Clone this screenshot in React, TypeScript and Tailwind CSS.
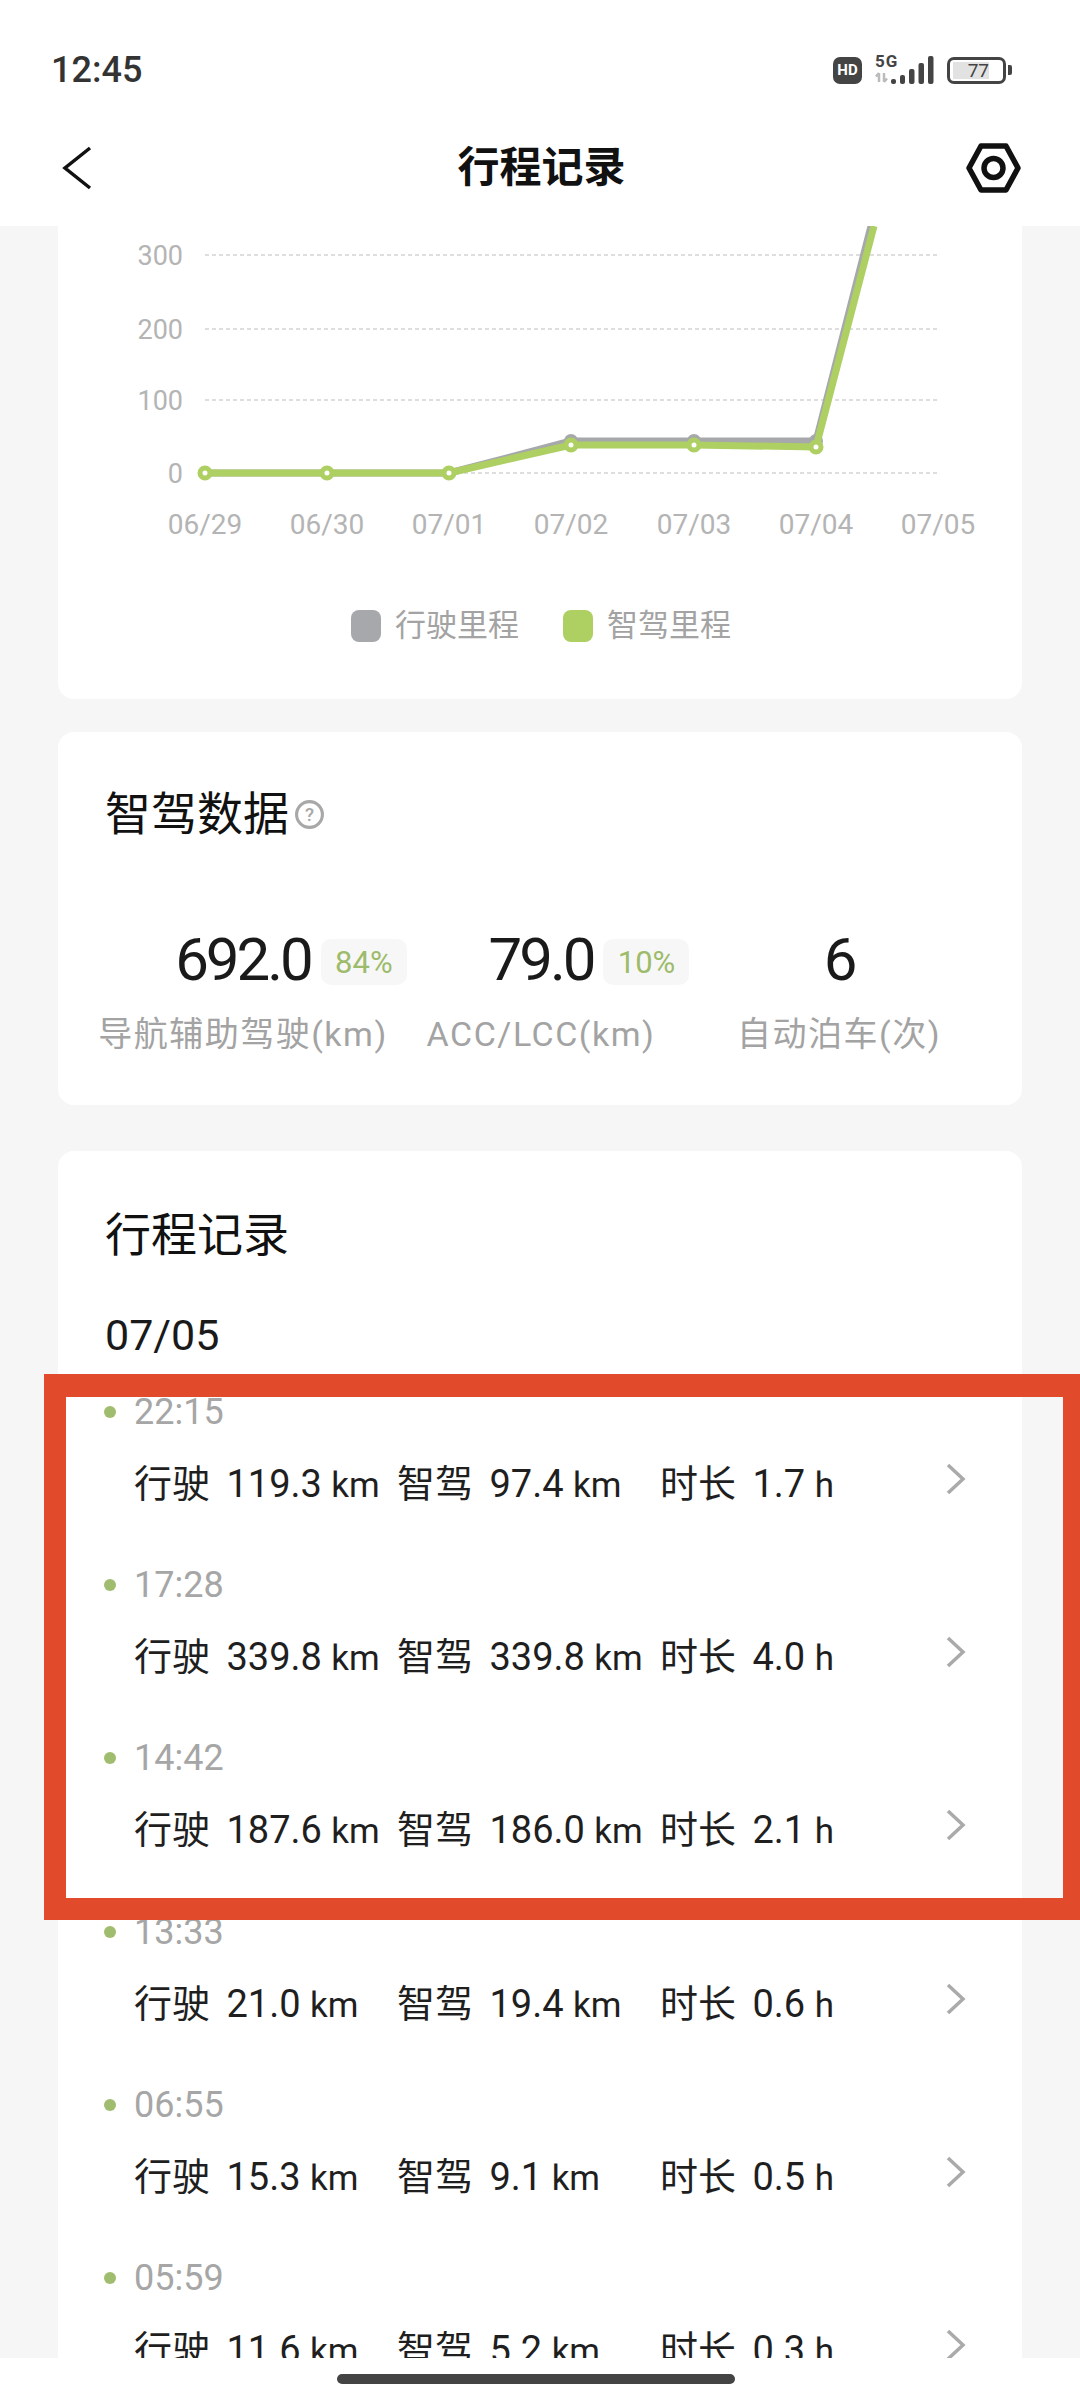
const trips = [
  { time: "22:15", drive: "119.3", smart: "97.4", hours: "1.7" },
  { time: "17:28", drive: "339.8", smart: "339.8", hours: "4.0" },
  { time: "14:42", drive: "187.6", smart: "186.0", hours: "2.1" },
  { time: "13:33", drive: "21.0", smart: "19.4", hours: "0.6" },
  { time: "06:55", drive: "15.3", smart: "9.1", hours: "0.5" },
  { time: "05:59", drive: "11.6", smart: "5.2", hours: "0.3" },
];

const stats = [
  { value: "692.0", badge: "84%", label: "导航辅助驾驶(km)" },
  { value: "79.0", badge: "10%", label: "ACC/LCC(km)" },
  { value: "6", badge: "", label: "自动泊车(次)" },
];

const xDates = ["06/29", "06/30", "07/01", "07/02", "07/03", "07/04", "07/05"];
const xPos = [205, 327, 449, 571, 694, 816, 938];
const gridY = [
  { label: "300", y: 255 },
  { label: "200", y: 329 },
  { label: "100", y: 400 },
  { label: "0", y: 473 },
];

const grayPts = [
  [205, 473],
  [327, 473],
  [449, 473],
  [571, 441],
  [694, 441],
  [816, 441],
];
const greenPts = [
  [205, 473],
  [327, 473],
  [449, 473],
  [571, 445],
  [694, 445],
  [816, 447],
];

function toLine(points: number[][], end: string) {
  return points.map((p) => p.join(",")).join(" ") + " " + end;
}

function MileageChart() {
  return (
    <svg viewBox="58 226 966 324" className="block h-[324px] w-[966px]">
      {gridY.map((g) => (
        <g key={g.label}>
          <line x1={205} x2={939} y1={g.y} y2={g.y} stroke="#d4d4d4" strokeWidth={1.5} strokeDasharray="4 3" />
          <text x={183} y={g.y + 10} textAnchor="end" fontSize={27} fill="#b4b4b4" fontFamily="Roboto">
            {g.label}
          </text>
        </g>
      ))}
      {xDates.map((d, i) => (
        <text key={d} x={xPos[i]} y={534} textAnchor="middle" fontSize={28} fill="#b4b4b4" fontFamily="Roboto">
          {d}
        </text>
      ))}
      <polyline points={toLine(grayPts, "871,226")} fill="none" stroke="#a6a8ab" strokeWidth={7} strokeLinejoin="round" />
      {grayPts.slice(3).map((p) => (
        <circle key={p[0]} cx={p[0]} cy={p[1]} r={7} fill="#a6a8ab" />
      ))}
      <polyline points={toLine(greenPts, "874,226")} fill="none" stroke="#aecf62" strokeWidth={7} strokeLinejoin="round" />
      {greenPts.map((p) => (
        <circle key={p[0]} cx={p[0]} cy={p[1]} r={5} fill="#ffffff" stroke="#aecf62" strokeWidth={5} />
      ))}
    </svg>
  );
}

function StatusIcons() {
  return (
    <div className="flex items-center">
      <div className="flex h-[27px] w-[29px] items-center justify-center rounded-[7px] bg-[#444444] text-[15px] leading-none font-bold text-white">
        HD
      </div>
      <svg width="64" height="30" viewBox="0 0 64 30" className="ml-[11px]">
        <text x="2" y="12" fontSize="17" fontWeight="700" letterSpacing="1" fill="#444444" fontFamily="Roboto">
          5G
        </text>
        <path d="M6 18v9M3 21.5 6 18M11 18v9M11 27l3-3.5" stroke="#bbbbbb" strokeWidth="2.5" fill="none" />
        <rect x="18" y="24" width="5" height="5" rx="2" fill="#444444" />
        <rect x="27" y="20" width="5" height="9" rx="2" fill="#444444" />
        <rect x="36" y="14" width="5.5" height="15" rx="2" fill="#444444" />
        <rect x="45.5" y="8" width="5.5" height="21" rx="2" fill="#444444" />
        <rect x="55" y="1" width="5.5" height="28" rx="2" fill="#444444" />
      </svg>
      <div className="ml-[10px] flex items-center">
        <div className="flex h-[27px] w-[59px] items-center rounded-[7px] border-[3px] border-[#444444] px-[3px]">
          <div className="flex h-[17px] w-[36px] items-center justify-end bg-[#e2e2e2] text-[19px] leading-none text-[#444444]">
            77
          </div>
        </div>
        <div className="ml-[2px] h-[10px] w-[4px] rounded-r-[2px] bg-[#444444]" />
      </div>
    </div>
  );
}

function TripCell({ label, value, unit }: { label: string; value: string; unit: string }) {
  return (
    <span>
      <span className="mr-[7px]">{label}</span> {value} <span className="text-[35px]">{unit}</span>
    </span>
  );
}

export default function App() {
  return (
    <div className="relative flex h-[2400px] w-[1080px] flex-col overflow-hidden bg-white font-['Roboto','Noto_Sans_CJK_SC',sans-serif]">
      <header className="h-[226px] shrink-0 bg-white">
        <div className="flex h-[140px] items-center justify-between pr-[68px] pl-[51px]">
          <span className="text-[36px] leading-none font-medium text-[#333333]">12:45</span>
          <StatusIcons />
        </div>
        <div className="grid h-[56px] grid-cols-[1fr_auto_1fr] items-center pr-[59px] pl-[62px]">
          <svg width="30" height="44" viewBox="0 0 30 44" fill="none">
            <path d="M28 2 3 22l25 20" stroke="#111111" strokeWidth="3.5" />
          </svg>
          <h1 className="text-[42px] leading-none font-bold text-[#111111]">行程记录</h1>
          <svg width="55" height="50" viewBox="0 0 55 50" fill="none" className="justify-self-end">
            <path d="M15 3h25l12 22-12 22H15L3 25Z" stroke="#111111" strokeWidth="5.5" strokeLinejoin="round" />
            <circle cx="27.5" cy="25" r="9.5" stroke="#111111" strokeWidth="5.5" />
          </svg>
        </div>
      </header>

      <main className="min-h-0 flex-1 overflow-hidden bg-[#f6f6f6] px-[58px]">
        <section className="h-[473px] rounded-b-[16px] bg-white">
          <MileageChart />
          <div className="mt-[60px] flex items-center pl-[293px] text-[31px] leading-[32px] text-[#a3a3a3]">
            <span className="h-[32px] w-[30px] rounded-[8px] bg-[#a6a8ab]" />
            <span className="ml-[14px] w-[168px]">行驶里程</span>
            <span className="h-[32px] w-[30px] rounded-[8px] bg-[#aecf62]" />
            <span className="ml-[14px]">智驾里程</span>
          </div>
        </section>

        <section className="mt-[33px] h-[373px] rounded-[16px] bg-white pt-[60px]">
          <div className="flex h-[44px] items-center pl-[47px]">
            <h2 className="text-[46px] leading-none text-[#111111]">智驾数据</h2>
            <svg width="31" height="31" viewBox="0 0 30 30" fill="none" className="ml-[5px]">
              <circle cx="15" cy="15" r="12.5" stroke="#a8a8a8" strokeWidth="3" />
              <text x="15" y="21.5" textAnchor="middle" fontSize="18" fontWeight="500" fill="#a8a8a8" fontFamily="Roboto">
                ?
              </text>
            </svg>
          </div>
          <div className="mt-[94px] grid grid-cols-[298px_298px_298px] pl-[36px]">
            {stats.map((s) => (
              <div key={s.label} className="flex flex-col items-center">
                <div className="relative h-[60px] text-[60px] leading-[60px] tracking-[-3px] text-[#1a1a1a]">
                  {s.value}
                  {s.badge && (
                    <span className="absolute top-[9px] left-full ml-[10px] flex h-[46px] w-[86px] items-center justify-center rounded-[10px] bg-[#f7f7f7] text-[31px] leading-none tracking-normal text-[#9dbb6a]">
                      {s.badge}
                    </span>
                  )}
                </div>
                <div className="mt-[22px] text-[34px] leading-[44px] tracking-[1.5px] whitespace-nowrap text-[#a3a3a3]">
                  {s.label}
                </div>
              </div>
            ))}
          </div>
        </section>

        <section className="mt-[46px] rounded-t-[16px] bg-white pt-[59px] pl-[47px]">
          <h2 className="h-[50px] text-[46px] leading-[50px] text-[#111111]">行程记录</h2>
          <div className="mt-[50px] h-[50px] text-[43px] leading-[50px] text-[#1a1a1a]">07/05</div>
          <div className="mt-[32px] -ml-[47px]">
            {trips.map((t) => (
              <div key={t.time} className="h-[173.2px] pl-[46px]">
                <div className="flex h-[40px] items-center">
                  <span className="h-[12px] w-[12px] rounded-full bg-[#a0bd6f]" />
                  <span className="ml-[18px] text-[36px] leading-none text-[#a6a6a6]">{t.time}</span>
                </div>
                <div className="mt-[33px] flex h-[40px] items-center pr-[56px] pl-[30px]">
                  <div className="grid flex-1 grid-cols-[263px_263px_264px] text-[38px] leading-[40px] whitespace-nowrap text-[#1f1f1f]">
                    <TripCell label="行驶" value={t.drive} unit="km" />
                    <TripCell label="智驾" value={t.smart} unit="km" />
                    <TripCell label="时长" value={t.hours} unit="h" />
                  </div>
                  <svg width="20" height="32" viewBox="0 0 20 32" fill="none" className="mb-[12px] shrink-0">
                    <path d="M2 2l15 14L2 30" stroke="#aaaaaa" strokeWidth="3.5" />
                  </svg>
                </div>
              </div>
            ))}
          </div>
        </section>
      </main>

      <footer className="flex h-[42px] shrink-0 items-start justify-center bg-white pt-[16px] pr-[8px]">
        <div className="h-[10px] w-[398px] rounded-full bg-[#444444]" />
      </footer>

      {/* red annotation frame drawn over the list */}
      <div className="pointer-events-none absolute top-[1374px] left-[44px] h-[546px] w-[1036px] border-t-[23px] border-r-[17px] border-b-[22px] border-l-[22px] border-[#e14a2a]" />
    </div>
  );
}
